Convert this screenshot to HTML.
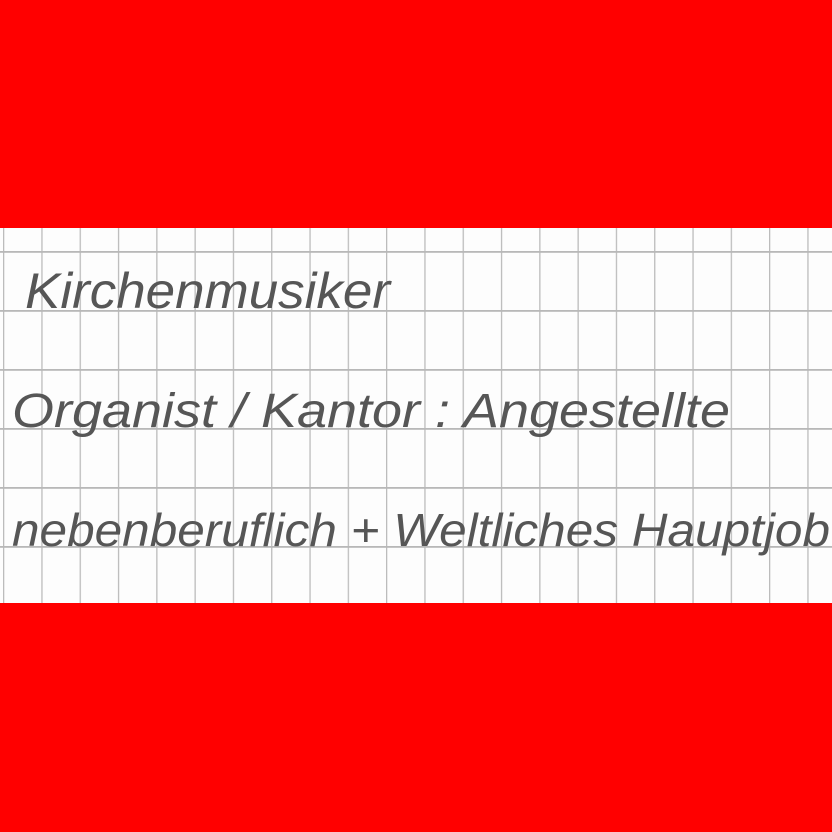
<!DOCTYPE html>
<html><head><meta charset="utf-8"><style>
html,body{margin:0;padding:0;width:832px;height:832px;overflow:hidden;background:#ff0000}
</style></head><body>
<svg width="832" height="832" xmlns="http://www.w3.org/2000/svg" style="display:block">
<defs>
<pattern id="v" x="3" y="0" width="38.3" height="832" patternUnits="userSpaceOnUse">
<rect x="0" y="0" width="1.3" height="832" fill="#bcbcbc"/>
</pattern>
<pattern id="h" x="0" y="251" width="832" height="59" patternUnits="userSpaceOnUse">
<rect x="0" y="0" width="832" height="1.8" fill="#b8b8b8"/>
</pattern>
</defs>
<rect x="0" y="0" width="832" height="832" fill="#ff0000"/>
<rect x="0" y="228" width="832" height="375" fill="#fdfdfd"/>
<rect x="0" y="228" width="832" height="375" fill="url(#v)"/>
<rect x="0" y="228" width="832" height="375" fill="url(#h)"/>
<g font-family="Liberation Sans, sans-serif" fill="#565656" font-style="italic">
<text x="25" y="308" font-size="50" textLength="365" lengthAdjust="spacingAndGlyphs">Kirchenmusiker</text>
<text x="12" y="427" font-size="48" textLength="718" lengthAdjust="spacingAndGlyphs">Organist / Kantor : Angestellte</text>
<text x="12" y="546" font-size="46" textLength="818" lengthAdjust="spacingAndGlyphs">nebenberuflich + Weltliches Hauptjob</text>
</g>
</svg>
</body></html>
